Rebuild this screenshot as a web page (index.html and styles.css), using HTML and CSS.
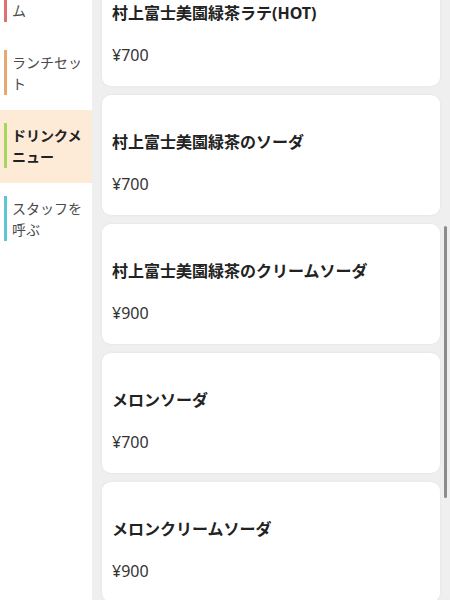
FILE: index.html
```html
<!DOCTYPE html>
<html lang="ja">
<head>
<meta charset="utf-8">
<title>メニュー</title>
<link rel="stylesheet" href="styles.css">
</head>
<body>
<div class="app">
  <nav class="sidebar">
    <ul class="cat-list">
      <li class="cat"><span class="cat-label bar-red">甘味アイテム</span></li>
      <li class="cat"><span class="cat-label bar-orange">ランチセット</span></li>
      <li class="cat active"><span class="cat-label bar-green">ドリンクメニュー</span></li>
      <li class="cat"><span class="cat-label bar-cyan">スタッフを呼ぶ</span></li>
    </ul>
  </nav>
  <main class="main">
    <div class="cards">
      <div class="card"><div class="card-title">村上富士美園緑茶ラテ(HOT)</div><div class="card-price">¥700</div></div>
      <div class="card"><div class="card-title">村上富士美園緑茶のソーダ</div><div class="card-price">¥700</div></div>
      <div class="card"><div class="card-title">村上富士美園緑茶のクリームソーダ</div><div class="card-price">¥900</div></div>
      <div class="card"><div class="card-title">メロンソーダ</div><div class="card-price">¥700</div></div>
      <div class="card"><div class="card-title">メロンクリームソーダ</div><div class="card-price">¥900</div></div>
    </div>
    <div class="scrollbar"></div>
  </main>
</div>
</body>
</html>
```

FILE: styles.css
```css
* { box-sizing: border-box; }
html, body { margin: 0; padding: 0; }
body {
  font-family: "Noto Sans", "Noto Sans CJK JP", sans-serif;
  color: #333;
  background: #fff;
}
.app {
  display: flex;
  width: 450px;
  height: 600px;
  overflow: hidden;
}
.sidebar {
  width: 92px;
  flex: none;
  background: #fff;
}
.cat-list {
  list-style: none;
  margin: -36px 0 0 0;
  padding: 0;
}
.cat {
  padding: 13px 6px 15px 4px;
}
.cat.active {
  background: #fdebd8;
}
.cat-label {
  display: block;
  border-left: 3px solid #ccc;
  padding: 2px 0 1px 5px;
  font-size: 14px;
  line-height: 21px;
  color: #4a4a4a;
}
.cat.active .cat-label {
  font-weight: 700;
  color: #222;
}
.bar-red { border-left-color: #e07070; }
.bar-orange { border-left-color: #e8a870; }
.bar-green { border-left-color: #a6d65c; }
.bar-cyan { border-left-color: #5cc6d6; }
.main {
  flex: 1;
  position: relative;
  background: #efefef;
  padding: 0 10px;
}
.cards {
  display: flex;
  flex-direction: column;
  gap: 9px;
  margin-top: -34px;
}
.card {
  height: 120px;
  background: #fff;
  border-radius: 9px;
  box-shadow: 0 0 3px rgba(0, 0, 0, 0.06);
  padding: 36px 10px 0 10px;
}
.card-title {
  font-size: 16px;
  line-height: 22px;
  font-weight: 700;
  color: #222;
}
.card-price {
  margin-top: 20px;
  font-size: 16px;
  line-height: 22px;
  color: #333;
}
.scrollbar {
  position: absolute;
  right: 3px;
  top: 226px;
  width: 3px;
  height: 272px;
  border-radius: 2px;
  background: #8c8c8c;
}
```
